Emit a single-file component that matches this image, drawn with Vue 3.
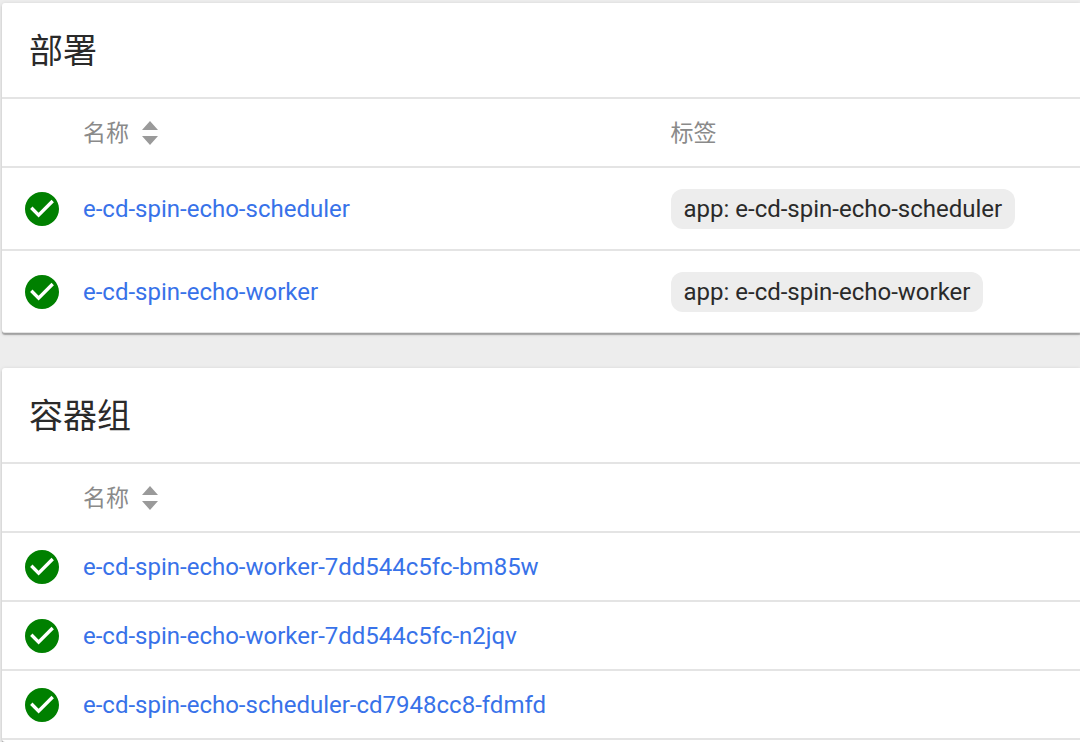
<script setup>
const cards = [
  {
    id: 'deployments',
    title: '部署',
    labelled: true,
    rows: [
      { name: 'e-cd-spin-echo-scheduler', label: 'app: e-cd-spin-echo-scheduler' },
      { name: 'e-cd-spin-echo-worker', label: 'app: e-cd-spin-echo-worker' },
    ],
  },
  {
    id: 'pods',
    title: '容器组',
    labelled: false,
    rows: [
      { name: 'e-cd-spin-echo-worker-7dd544c5fc-bm85w' },
      { name: 'e-cd-spin-echo-worker-7dd544c5fc-n2jqv' },
      { name: 'e-cd-spin-echo-scheduler-cd7948cc8-fdmfd' },
    ],
  },
]
</script>

<template>
  <main class="page">
    <section
      v-for="card in cards"
      :key="card.id"
      class="card"
      :class="{ labelled: card.labelled }"
      :aria-labelledby="card.id"
    >
      <h2 :id="card.id" class="title">{{ card.title }}</h2>
      <table class="list" :aria-labelledby="card.id">
        <colgroup>
          <col class="col-status" />
          <col class="col-name" />
          <col />
        </colgroup>
        <thead>
          <tr>
            <td></td>
            <th scope="col">
              <button type="button" class="sort">
                名称
                <svg class="arrows" viewBox="0 0 16 24" aria-hidden="true">
                  <path d="M8 0l8 9H0zM8 24l8-9H0z" />
                </svg>
              </button>
            </th>
            <th v-if="card.labelled" scope="col">标签</th>
            <td v-else></td>
          </tr>
        </thead>
        <tbody>
          <tr v-for="row in card.rows" :key="row.name">
            <td>
              <svg class="status" viewBox="2 2 20 20" aria-hidden="true">
                <path
                  d="M12 2C6.48 2 2 6.48 2 12s4.48 10 10 10 10-4.48 10-10S17.52 2 12 2zm-2 15l-5-5 1.41-1.41L10 14.17l7.59-7.59L19 8l-9 9z"
                />
              </svg>
            </td>
            <td><a href="#" class="link">{{ row.name }}</a></td>
            <td><span v-if="row.label" class="chip">{{ row.label }}</span></td>
          </tr>
        </tbody>
      </table>
    </section>
  </main>
</template>

<style>
body {
  margin: 0;
  background: #ededed;
}
</style>

<style scoped>
.page {
  box-sizing: border-box;
  min-height: 100vh;
  padding: 3px 0 0 2px;
  display: flex;
  flex-direction: column;
  gap: 35px;
  overflow: hidden;
  color: #2a2a2a;
  font-family: Roboto, "Noto Sans CJK SC", sans-serif;
  font-size: 24px;
  line-height: 32px;
}

.card {
  background: #fff;
  border-bottom: 1px solid #e4e4e4;
  border-radius: 3px 0 0 3px;
  box-shadow:
    0 2px 1px rgba(0, 0, 0, 0.26),
    0 1px 4px rgba(0, 0, 0, 0.14);
}

.card:last-child {
  flex: 1;
  border-bottom: 0;
}

.title {
  margin: 0;
  padding: 24px 27px 22px;
  font-size: 34px;
  font-weight: 400;
  line-height: 48px;
}

.list {
  width: 100%;
  table-layout: fixed;
  border-collapse: separate;
  border-spacing: 0;
}

.col-status {
  width: 81px;
}

.col-name {
  width: 54.5%;
}

.list th,
.list td {
  box-sizing: border-box;
  height: 69px;
  padding: 0;
  border-top: 2px solid #e4e4e4;
  text-align: left;
  vertical-align: middle;
}

.list th {
  padding-top: 2px;
  color: #8a8a8a;
  font-size: 23px;
  font-weight: 400;
}

.labelled tbody td {
  height: 83px;
}

.card:last-child tbody tr:last-child td {
  height: 71px;
  border-bottom: 2px solid #e4e4e4;
}

.sort {
  display: flex;
  align-items: center;
  gap: 13px;
  padding: 0;
  border: 0;
  background: none;
  color: inherit;
  font: inherit;
  cursor: pointer;
}

.arrows {
  width: 16px;
  height: 24px;
  margin-bottom: 2px;
  fill: #9a9a9a;
}

.status {
  display: block;
  width: 34px;
  height: 34px;
  margin-left: 23px;
  fill: #008000;
}

.link {
  color: #3872e9;
  text-decoration: none;
}

.chip {
  display: inline-block;
  padding: 4px 13px;
  border-radius: 12px;
  background: #ededed;
}
</style>
